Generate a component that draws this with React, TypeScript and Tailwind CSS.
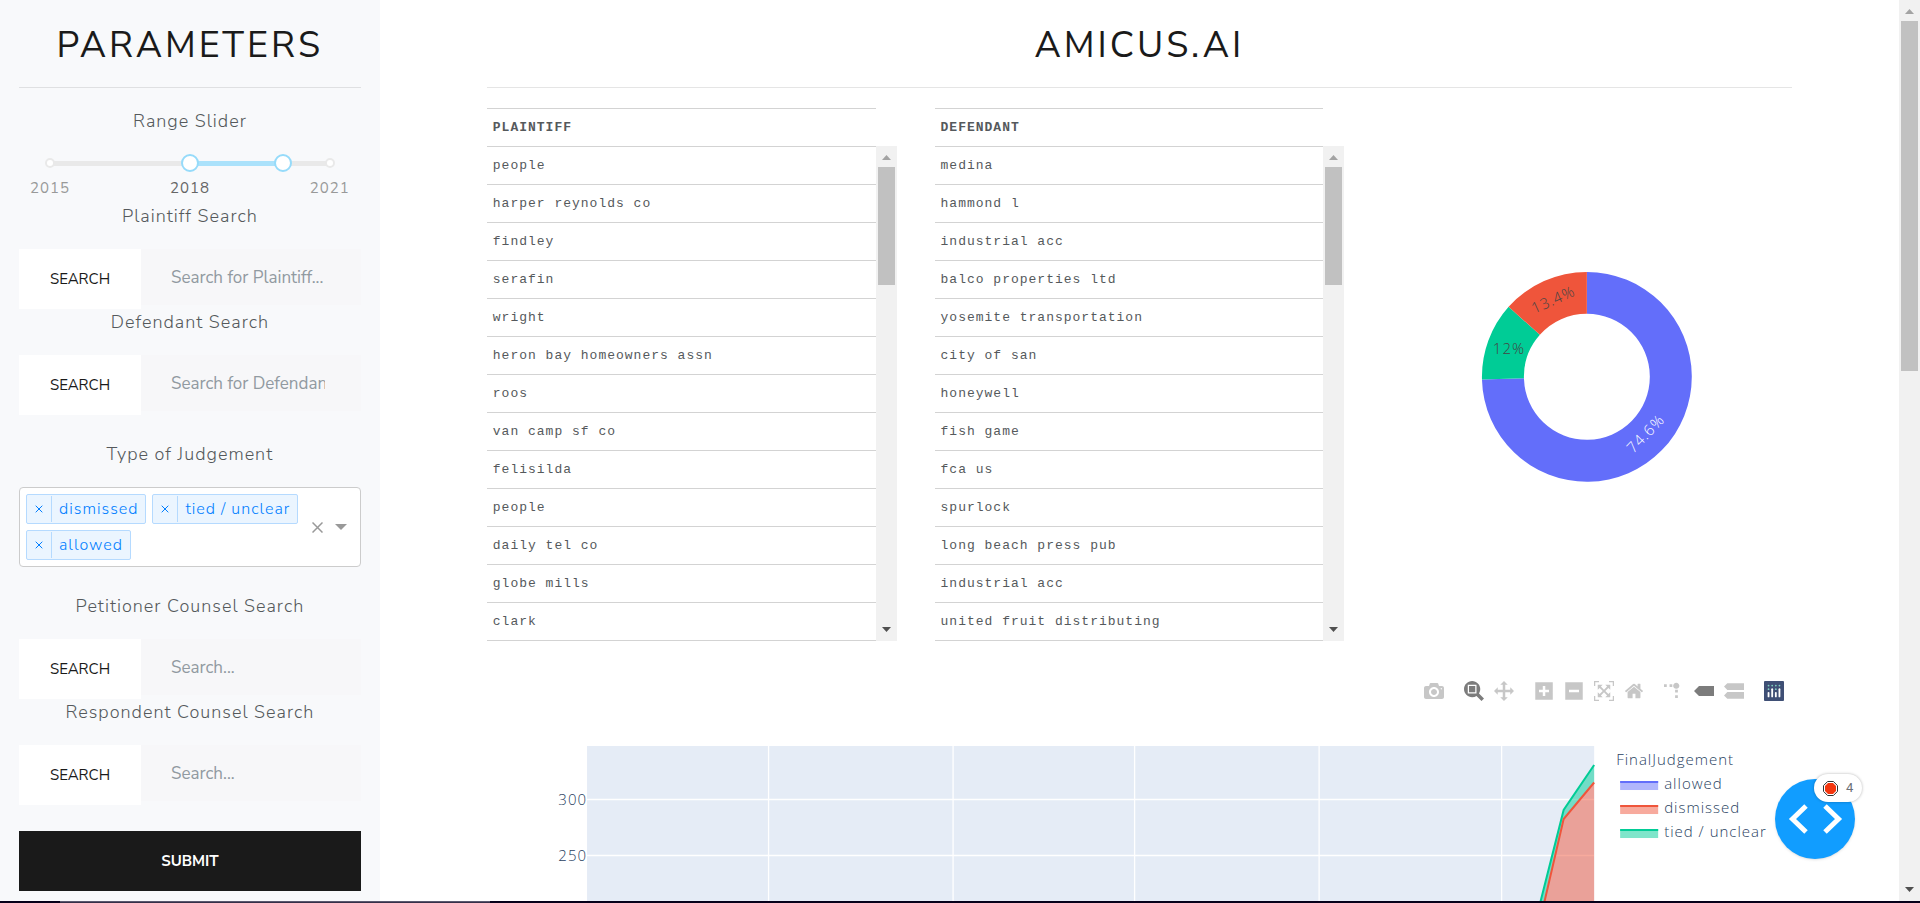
import React, { useState } from "react";

const PLAINTIFFS = [
  "people", "harper reynolds co", "findley", "serafin", "wright", "heron bay homeowners assn", "roos",
  "van camp sf co", "felisilda", "people", "daily tel co", "globe mills", "clark",
];
const DEFENDANTS = [
  "medina", "hammond l", "industrial acc", "balco properties ltd", "yosemite transportation", "city of san",
  "honeywell", "fish game", "fca us", "spurlock", "long beach press pub", "industrial acc",
  "united fruit distributing",
];

function ScrollBar({ thumb }: { thumb: string }) {
  return (
    <div className="flex h-full flex-col items-center bg-[#f1f1f1]" aria-hidden="true">
      <div className="flex h-[21px] shrink-0 items-end justify-center pb-[7px]">
        <svg width="9" height="5" viewBox="0 0 9 5"><path d="M4.5 0L9 5H0z" fill="#a3a3a3" /></svg>
      </div>
      <div className={"w-[17px] bg-[#c1c1c1] " + thumb} />
      <div className="mt-auto flex h-[21px] shrink-0 items-start justify-center pt-[7px]">
        <svg width="9" height="5" viewBox="0 0 9 5"><path d="M0 0H9L4.5 5z" fill="#505050" /></svg>
      </div>
    </div>
  );
}

function Label({ htmlFor, children }: { htmlFor?: string; children: React.ReactNode }) {
  return (
    <label htmlFor={htmlFor} className="block text-center text-[18px] leading-[26px] font-light tracking-[1px] text-[#55595c]">
      {children}
    </label>
  );
}

function SearchBox({ id, label, placeholder }: { id: string; label: string; placeholder: string }) {
  return (
    <div>
      <Label htmlFor={id}>{label}</Label>
      <div className="mt-5 flex items-start">
        <button type="button" className="h-[60px] w-[122px] shrink-0 bg-white text-[15px] text-[#1a1a1a]">SEARCH</button>
        <input
          id={id}
          type="text"
          placeholder={placeholder}
          className="h-14 min-w-0 flex-1 bg-[#f7f7f9] pr-9 pl-[30px] text-[17px] text-[#55595c] outline-none placeholder:text-[#919aa1]"
        />
      </div>
    </div>
  );
}

const THUMB =
  "pointer-events-none absolute inset-x-0 top-0 h-[18px] w-full appearance-none bg-transparent [&::-webkit-slider-thumb]:pointer-events-auto [&::-webkit-slider-thumb]:size-[18px] [&::-webkit-slider-thumb]:appearance-none [&::-webkit-slider-thumb]:rounded-full [&::-webkit-slider-thumb]:border-2 [&::-webkit-slider-thumb]:border-solid [&::-webkit-slider-thumb]:border-[#96dbfa] [&::-webkit-slider-thumb]:bg-white";

function YearRange() {
  const [from, setFrom] = useState(2018);
  const [to, setTo] = useState(2020);
  const pct = (year: number) => ((year - 2015) / 6) * 100;
  return (
    <div className="h-[69px] px-[22px] pt-5">
      <div className="relative h-[18px]">
        <div className="absolute inset-x-[9px] top-[7px] h-[5px] rounded-full bg-[#e9e9e9]">
          <div className="absolute inset-y-0 bg-[#abe2fb]" style={{ left: pct(from) + "%", right: 100 - pct(to) + "%" }} />
        </div>
        <span className="absolute top-1 left-1 size-[10px] rounded-full border-2 border-[#e9e9e9] bg-white" />
        <span className="absolute top-1 right-1 size-[10px] rounded-full border-2 border-[#e9e9e9] bg-white" />
        <input aria-label="From year" className={THUMB} type="range" min={2015} max={2021} value={from} onChange={(e) => setFrom(Number(e.target.value))} />
        <input aria-label="To year" className={THUMB} type="range" min={2015} max={2021} value={to} onChange={(e) => setTo(Number(e.target.value))} />
      </div>
      <div className="-mx-[11px] mt-[5px] flex justify-between text-[15px] leading-[22px] tracking-[1px] text-[#999]">
        <span>2015</span>
        <span className="text-[#666]">2018</span>
        <span>2021</span>
      </div>
    </div>
  );
}

function Tag({ children }: { children: React.ReactNode }) {
  return (
    <span className="flex h-[30px] items-stretch rounded-[2px] border border-[#b5daff] bg-[#ebf5ff] text-[#007eff]">
      <button type="button" aria-label="Remove" className="my-px flex w-[25px] items-center justify-center border-r border-[#b5daff]">
        <svg width="8" height="8" viewBox="0 0 8 8"><path d="M.7.7l6.6 6.6M7.3.7L.7 7.3" stroke="currentColor" /></svg>
      </button>
      <span className="px-[7px] text-[16px] leading-7 font-light tracking-[1px]">{children}</span>
    </span>
  );
}

function CaseTable({ title, rows }: { title: string; rows: string[] }) {
  return (
    <div className="flex items-stretch">
      <table className="min-w-0 flex-1 border-collapse text-left font-['Liberation_Mono',monospace] text-[13px] tracking-[1px] text-[#55595c]">
        <thead>
          <tr className="h-[38px] border-y border-[#d3d3d3]">
            <th className="w-[390px] px-[6px] pt-px font-bold">{title}</th>
          </tr>
        </thead>
        <tbody>
          {rows.map((r, i) => (
            <tr key={i} className="h-[38px] border-b border-[#d3d3d3]">
              <td className="px-[6px] pt-px">{r}</td>
            </tr>
          ))}
        </tbody>
      </table>
      <div className="mt-[38px] w-[21px] shrink-0">
        <ScrollBar thumb="h-[118px]" />
      </div>
    </div>
  );
}

function Donut() {
  return (
    <svg viewBox="0 0 410 533" className="w-full" role="img" aria-label="Share of judgements">
      <g transform="translate(205 269)" strokeWidth="0">
        <path d="M0-105A105 105 0 1 1-104.97 2.57L-62.98 1.54A63 63 0 1 0 0-63z" fill="#636efa" />
        <path d="M-104.97 2.57A105 105 0 0 1-78.3-70L-47-42A63 63 0 0 0-62.98 1.54z" fill="#00cc96" />
        <path d="M-78.3-70A105 105 0 0 1 0-105V-63A63 63 0 0 0-47-42z" fill="#ef553b" />
      </g>
      <g className="font-['Open_Sans',sans-serif] text-[15px] font-light tracking-[1px]" textAnchor="middle">
        <text transform="translate(264 326) rotate(-46)" y="5" fill="#fff">74.6%</text>
        <text transform="translate(171 191) rotate(-24)" y="6" fill="#444">13.4%</text>
        <text x="127" y="246" fill="#444">12%</text>
      </g>
    </svg>
  );
}

type Icon = { name: string; w?: number; m?: string; d: string; active?: boolean };
const D = "matrix(1 0 0 -1 0 850)";
const GROUPS: Icon[][] = [
  [{ name: "Download plot", d: "m500 450c-83 0-150-67-150-150 0-83 67-150 150-150 83 0 150 67 150 150 0 83-67 150-150 150z m400 150h-120c-16 0-34 13-39 29l-31 93c-6 15-23 28-40 28h-340c-16 0-34-13-39-28l-31-94c-6-15-23-28-40-28h-120c-55 0-100-45-100-100v-450c0-55 45-100 100-100h800c55 0 100 45 100 100v450c0 55-45 100-100 100z m-400-550c-138 0-250 112-250 250 0 138 112 250 250 250 138 0 250-112 250-250 0-138-112-250-250-250z m365 380c-19 0-35 16-35 35 0 19 16 35 35 35 19 0 35-16 35-35 0-19-16-35-35-35z" }],
  [
    { name: "Zoom", active: true, d: "m1000-25l-250 251c40 63 63 138 63 218 0 224-182 406-407 406-224 0-406-182-406-406s183-406 407-406c80 0 155 22 218 62l250-250 125 125z m-812 250l0 438 437 0 0-438-437 0z m62 375l313 0 0-312-313 0 0 312z" },
    { name: "Pan", d: "m1000 350l-187 188 0-125-250 0 0 250 125 0-188 187-187-187 125 0 0-250-250 0 0 125-188-188 186-187 0 125 252 0 0-250-125 0 187-188 188 188-125 0 0 250 250 0 0-126 187 188z" },
  ],
  [
    { name: "Zoom in", w: 875, d: "m1 787l0-875 875 0 0 875-875 0z m687-500l-187 0 0-187-125 0 0 187-188 0 0 125 188 0 0 187 125 0 0-187 187 0 0-125z" },
    { name: "Zoom out", w: 875, d: "m0 788l0-876 875 0 0 876-875 0z m688-500l-500 0 0 125 500 0 0-125z" },
    { name: "Autoscale", d: "m250 850l-187 0-63 0 0-62 0-188 63 0 0 188 187 0 0 62z m688 0l-188 0 0-62 188 0 0-188 62 0 0 188 0 62-62 0z m-875-938l0 188-63 0 0-188 0-62 63 0 187 0 0 62-187 0z m875 188l0-188-188 0 0-62 188 0 62 0 0 62 0 188-62 0z m-125 188l-1 0-93-94-156 156 156 156 92-93 2 0 0 250-250 0 0-2 93-92-156-156-156 156 94 92 0 2-250 0 0-250 0 0 93 93 157-156-157-156-93 94 0 0 0-250 250 0 0 0-94 93 156 157 156-157-93-93 0 0 250 0 0 250z" },
    { name: "Reset axes", w: 928, d: "m786 296v-267q0-15-11-26t-25-10h-214v214h-143v-214h-214q-15 0-25 10t-11 26v267q0 1 0 2t0 2l321 264 321-264q1-1 1-4z m124 39l-34-41q-5-5-12-6h-2q-7 0-12 3l-386 322-386-322q-7-4-13-4-7 2-12 7l-35 41q-4 5-3 13t6 12l401 334q18 15 42 15t43-15l136-114v109q0 8 5 13t13 5h107q8 0 13-5t5-13v-227l122-102q5-5 6-12t-4-13z" },
  ],
  [
    { name: "Toggle spike lines", m: "matrix(1.5 0 0 -1.5 0 850)", d: "M512 409c0-57-46-104-103-104-57 0-104 47-104 104 0 57 47 103 104 103 57 0 103-46 103-103z m-327-39l92 0 0 92-92 0z m-185 0l92 0 0 92-92 0z m370-186l92 0 0 93-92 0z m0-184l92 0 0 92-92 0z" },
    { name: "Show closest data", w: 1500, active: true, d: "m375 725l0 0-375-375 375-374 0-1 1125 0 0 750-1125 0z" },
    { name: "Compare data", w: 1125, d: "m187 786l0 2-187-188 188-187 0 0 937 0 0 373-938 0z m0-499l0 1-187-188 188-188 0 0 937 0 0 376-938-1z" },
  ],
];

function ModeBar() {
  return (
    <div className="flex justify-end gap-5 pt-10 pr-2">
      {GROUPS.map((g, i) => (
        <div key={i} className="flex gap-[10px]">
          {g.map((ic) => (
            <button key={ic.name} type="button" aria-label={ic.name} className={ic.active ? "text-[#7c7c7c]" : "text-[#c7c7c7]"}>
              <svg width="20" height="20" viewBox={`0 0 ${ic.w ?? 1000} 1000`} fill="currentColor">
                <path d={ic.d} transform={ic.m ?? D} />
              </svg>
            </button>
          ))}
        </div>
      ))}
      <a href="#plotly" aria-label="Plotly">
        <svg width="20" height="20" viewBox="0 0 132 132">
          <rect width="132" height="132" rx="6" fill="#3f4f75" />
          <g fill="#80cfbe">
            <circle cx="102" cy="30" r="6" /><circle cx="78" cy="30" r="6" /><circle cx="78" cy="54" r="6" />
            <circle cx="54" cy="30" r="6" /><circle cx="30" cy="30" r="6" /><circle cx="30" cy="54" r="6" />
          </g>
          <g fill="#fff">
            <rect x="24" y="72" width="12" height="36" rx="6" /><rect x="72" y="72" width="12" height="36" rx="6" />
            <rect x="48" y="48" width="12" height="60" rx="6" /><rect x="96" y="48" width="12" height="60" rx="6" />
          </g>
        </svg>
      </a>
    </div>
  );
}

const LEGEND = [
  { name: "allowed", color: "#636efa" },
  { name: "dismissed", color: "#ef553b" },
  { name: "tied / unclear", color: "#00cc96" },
];

function AreaChart() {
  return (
    <svg viewBox="0 0 1305 300" className="w-full" role="img" aria-label="Judgements over time">
      <rect x="100" y="45" width="1007" height="255" fill="#e5ecf6" />
      <path d="M281.5 45V300M466 45V300M647.5 45V300M832 45V300M1014.5 45V300M100 98.5H1107M100 154.5H1107" stroke="#fff" strokeWidth="1.3" />
      <path d="M1107 64L1076.5 109L1053 202L1028 300H1035L1057 202L1076.5 118L1107 81.5z" fill="#00cc96" fillOpacity=".5" />
      <path d="M1107 81.5L1076.5 118L1057 202L1035 300H1107z" fill="#ef553b" fillOpacity=".5" />
      <path d="M1107 64L1076.5 109L1053 202L1028 300" fill="none" stroke="#00cc96" strokeWidth="2" />
      <path d="M1107 81.5L1076.5 118L1057 202L1035 300" fill="none" stroke="#ef553b" strokeWidth="2" />
      <g className="font-['Open_Sans',sans-serif] text-[15px] font-light tracking-[1px]" fill="#2a3f5f">
        <text x="100" y="104" textAnchor="end">300</text>
        <text x="100" y="160" textAnchor="end">250</text>
        <text x="1129" y="64">FinalJudgement</text>
        {LEGEND.map((l, i) => (
          <g key={l.name} transform={`translate(1133 ${79 + i * 24})`}>
            <rect y="1" width="38" height="9" fill={l.color} fillOpacity=".5" />
            <rect y="1" width="38" height="2" fill={l.color} />
            <text x="44" y="9">{l.name}</text>
          </g>
        ))}
      </g>
    </svg>
  );
}

function DebugBadge() {
  return (
    <div className="absolute right-[44px] bottom-[42px] size-20">
      <button type="button" aria-label="Debug menu" className="size-20 rounded-full bg-[#119dff] shadow-sm">
        <svg width="80" height="80" viewBox="0 0 80 80" fill="none" stroke="#fff" strokeWidth="5">
          <path d="M31 27L17.5 40L31 53M50 27L63.5 40L50 53" />
        </svg>
      </button>
      <div className="absolute -top-[5px] left-[39px] flex h-7 w-12 items-center gap-2 rounded-full bg-white pl-[9px] font-['Roboto',sans-serif] text-[13px] text-[#6b6f76] shadow-[0_0_3px_rgba(0,0,0,0.3)]">
        <svg width="15" height="15" viewBox="0 0 15 15">
          <path d="M4.6.5H10.4L14.5 4.6V10.4L10.4 14.5H4.6L.5 10.4V4.6z" fill="#fff" stroke="#333" />
          <path d="M5 2H10L13 5V10L10 13H5L2 10V5z" fill="#f4360e" />
        </svg>
        4
      </div>
    </div>
  );
}

const HEADING = "text-center text-[36px] leading-[42px] tracking-[3px] text-[#1a1a1a]";

export default function App() {
  return (
    <div className="flex h-screen flex-col overflow-hidden bg-white font-['Nunito_Sans','Open_Sans',sans-serif]">
      <div className="flex min-h-0 flex-1">
        <div className="flex min-w-0 flex-1">
          <aside className="w-1/5 shrink-0 bg-[#f8f9fb] px-[19px] pt-[25px]">
            <h2 className={HEADING}>PARAMETERS</h2>
            <hr className="my-5 border-[#dfe0e2]" />
            <Label>Range Slider</Label>
            <YearRange />
            <SearchBox id="plaintiff" label="Plaintiff Search" placeholder="Search for Plaintiff..." />
            <SearchBox id="defendant" label="Defendant Search" placeholder="Search for Defendant..." />
            <div className="py-[26px]">
              <Label>Type of Judgement</Label>
              <div className="mt-5 flex h-20 items-center rounded border border-[#ccc] bg-white pr-[13px] pl-[6px]">
                <div className="flex flex-1 flex-wrap gap-[6px]">
                  <Tag>dismissed</Tag>
                  <Tag>tied / unclear</Tag>
                  <Tag>allowed</Tag>
                </div>
                <button type="button" aria-label="Clear all" className="mr-3">
                  <svg width="11" height="11" viewBox="0 0 11 11"><path d="M.5.5l10 10M10.5.5l-10 10" stroke="#999" strokeWidth="1.5" /></svg>
                </button>
                <button type="button" aria-label="Open options">
                  <svg width="12" height="6" viewBox="0 0 12 6"><path d="M0 0H12L6 6z" fill="#999" /></svg>
                </button>
              </div>
            </div>
            <SearchBox id="petitioner" label="Petitioner Counsel Search" placeholder="Search..." />
            <SearchBox id="respondent" label="Respondent Counsel Search" placeholder="Search..." />
            <button type="button" className="mt-[26px] h-[60px] w-full bg-[#1a1a1a] text-[15px] font-bold text-white">SUBMIT</button>
          </aside>
          <div className="relative min-w-0 flex-1 overflow-hidden">
            <main className="px-[107px] pt-[25px]">
              <h2 className={HEADING}>AMICUS.AI</h2>
              <hr className="my-5 border-[#e5e5e5]" />
              <div className="grid grid-cols-3 gap-x-[38px]">
                <CaseTable title="PLAINTIFF" rows={PLAINTIFFS} />
                <CaseTable title="DEFENDANT" rows={DEFENDANTS} />
                <Donut />
              </div>
              <ModeBar />
              <AreaChart />
            </main>
            <DebugBadge />
          </div>
        </div>
        <div className="w-[21px] shrink-0">
          <ScrollBar thumb="h-[350px]" />
        </div>
      </div>
      <div className="flex h-[2px] shrink-0 bg-[#06001a]">
        <div className="ml-[60px] w-[430px] border-t border-[#5a586e] bg-[#353049]" />
      </div>
    </div>
  );
}
